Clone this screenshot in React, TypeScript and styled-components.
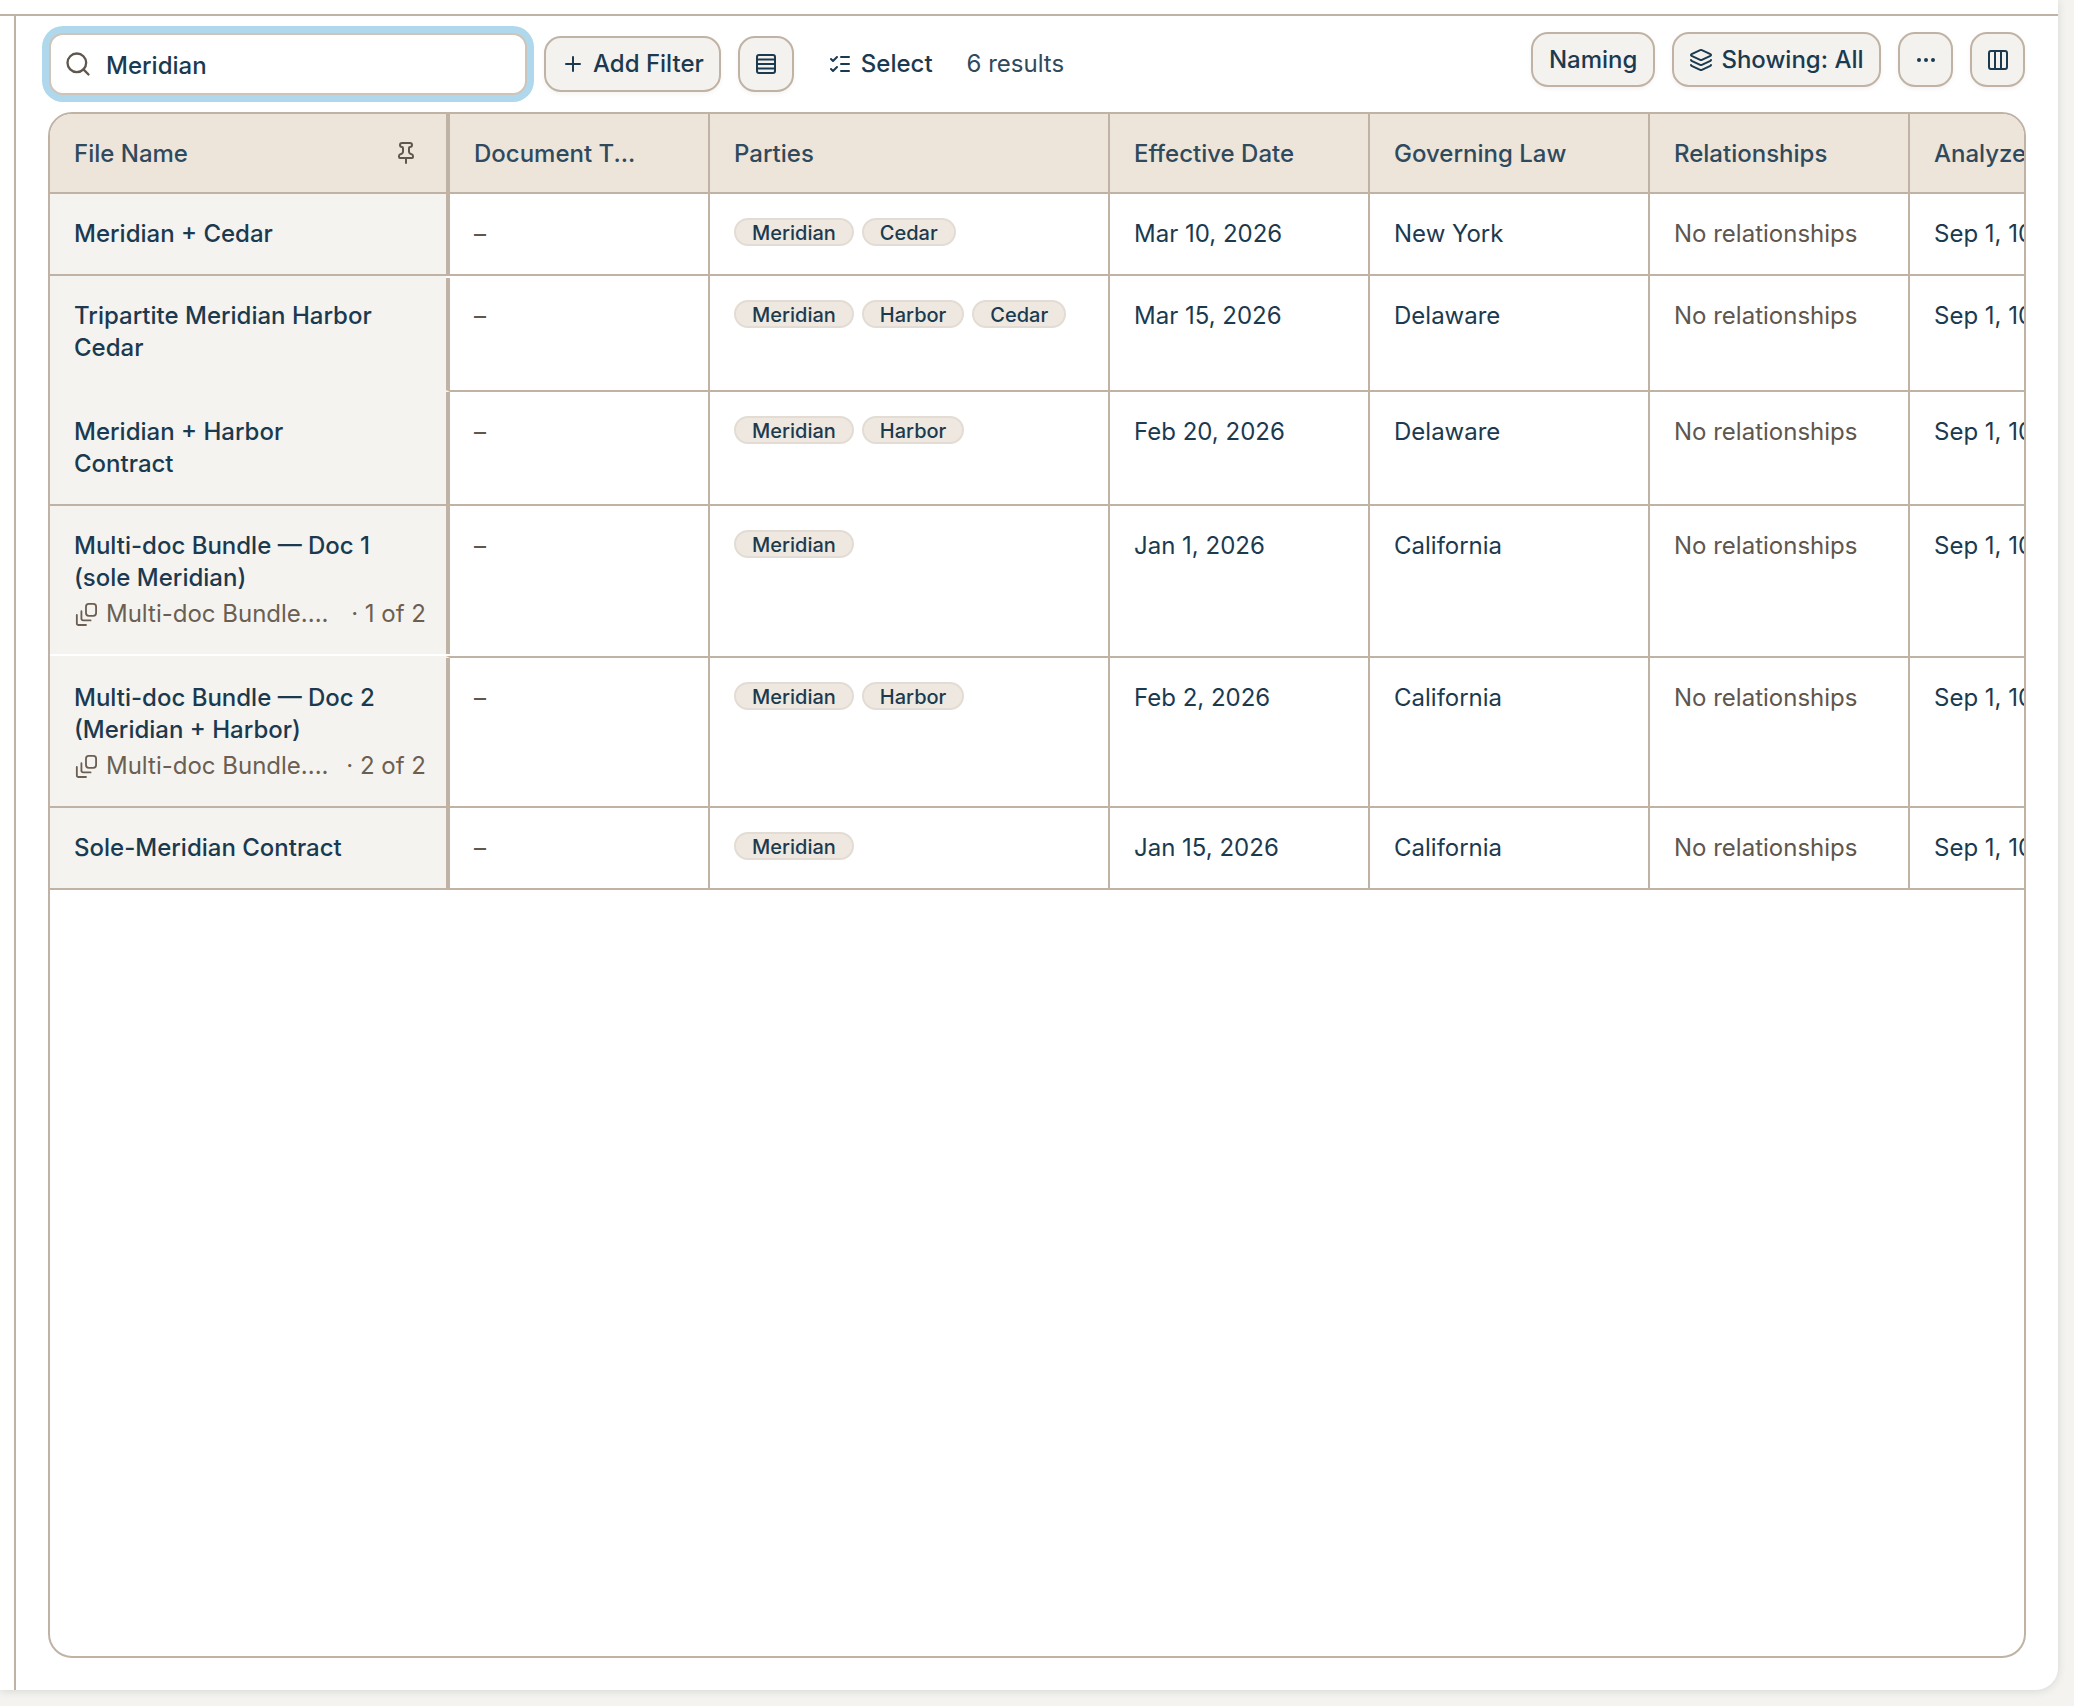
import React from "react";
import styled, { createGlobalStyle } from "styled-components";
import { Search, Plus, Rows4, ListChecks, Layers, Ellipsis, Columns3, Pin } from "lucide-react";

const GlobalStyle = createGlobalStyle`
  html, body { margin: 0; padding: 0; height: 100%; background: #f4f3ef; overflow: hidden; }
  * { box-sizing: border-box; }
  body { font-family: Inter, "Noto Sans", sans-serif; color: #1b3a50; }
`;

const LINE = "#c0b3a5";
const NAVY = "#1b3a50";
const SLATE = "#2f4a5c";
const MUTED = "#5f564c";
const COLS = "400px 260px 400px 260px 280px 260px 260px";

const Panel = styled.div`
  width: 2058px;
  height: 1690px;
  padding-top: 14px;
  background: #fff;
  border-bottom-right-radius: 22px;
  box-shadow: 0 1px 8px rgba(30, 50, 60, 0.14);
  display: flex;
  flex-direction: column;
`;
const TopRule = styled.div`
  height: 2px;
  background: ${LINE};
  flex: none;
`;
const Main = styled.main`
  flex: 1;
  min-height: 0;
  margin-left: 14px;
  border-left: 2px solid ${LINE};
  display: flex;
  flex-direction: column;
`;
const Toolbar = styled.div`
  height: 96px;
  flex: none;
  padding: 16px 33px 0 32px;
  display: flex;
  justify-content: space-between;
  align-items: flex-start;
`;
const LeftGroup = styled.div`
  display: flex;
  align-items: center;
  gap: 17px;
  padding: 1px 0 0 1px;
`;
const RightGroup = styled.div`
  display: flex;
  align-items: center;
  gap: 17px;
`;
const SearchBox = styled.label`
  width: 478px;
  height: 62px;
  display: flex;
  align-items: center;
  gap: 14px;
  padding-left: 13px;
  background: #fff;
  border: 2px solid #cfc4b8;
  border-radius: 14px;
  box-shadow: 0 0 0 7px #b0d8ec;
  color: ${MUTED};
`;
const SearchInput = styled.input`
  flex: 1;
  min-width: 0;
  border: 0;
  outline: 0;
  padding: 4px 0 0;
  background: transparent;
  font: 500 24px/32px Inter, sans-serif;
  color: ${NAVY};
`;
const Button = styled.button`
  height: ${(p) => p.$size ?? 56}px;
  padding: 0 ${(p) => p.$pad ?? 15.5}px;
  display: inline-flex;
  align-items: center;
  justify-content: center;
  gap: 8px;
  background: #f4f2ee;
  border: 2px solid ${LINE};
  border-radius: 17px;
  box-shadow: 0 2px 4px rgba(60, 50, 40, 0.06);
  font: 500 24px/32px Inter, sans-serif;
  color: ${NAVY};
  white-space: nowrap;
`;
const IconButton = styled(Button)`
  width: ${(p) => p.$size ?? 56}px;
  padding: 0;
`;
const GhostButton = styled.button`
  height: 56px;
  padding: 0 17px;
  display: inline-flex;
  align-items: center;
  gap: 9px;
  background: transparent;
  border: 0;
  font: 500 24px/32px Inter, sans-serif;
  color: ${NAVY};
`;
const Results = styled.span`
  font: 400 24px/32px Inter, sans-serif;
  color: ${SLATE};
`;
const Table = styled.div`
  flex: 1;
  min-height: 0;
  margin: 0 32px 32px 32px;
  border: 2px solid ${LINE};
  border-radius: 24px;
  overflow: hidden;
  background: #fff;
`;
const Row = styled.div`
  display: grid;
  grid-template-columns: ${COLS};
  width: max-content;
`;
const HeadCell = styled.div`
  height: 80px;
  padding: 2px ${(p) => (p.$pinned ? 28 : 24)}px 0 24px;
  display: flex;
  align-items: center;
  justify-content: space-between;
  background: #ede4da;
  border-bottom: 2px solid ${LINE};
  border-right: ${(p) => (p.$pinned ? 4 : 2)}px solid ${LINE};
  font: 500 24px/32px Inter, sans-serif;
  color: ${SLATE};
  white-space: nowrap;
  svg { color: ${MUTED}; margin-top: -2px; }
`;
const Cell = styled.div`
  padding: 24px 24px ${(p) => (p.$tall ? 26 : 24)}px;
  border-bottom: 2px solid ${LINE};
  border-right: 2px solid ${LINE};
  font: 400 24px/32px Inter, sans-serif;
  color: ${(p) => (p.$muted ? MUTED : NAVY)};
  white-space: nowrap;
  overflow: hidden;
`;
const FileCell = styled.div`
  position: relative;
  padding: 24px 20px ${(p) => (p.$tall ? 26 : 24)}px 24px;
  background: #f5f3ef;
  border-bottom: 2px solid ${(p) => (p.$rule === "line" ? LINE : "transparent")};
  border-right: 4px solid ${LINE};
  font: 500 24px/32px Inter, sans-serif;
  color: ${NAVY};
  ${(p) =>
    p.$rule === "white"
      ? `&::after { content: ""; position: absolute; left: 0; right: -4px; bottom: 0; height: 2px; background: #fff; }`
      : ""}
  ${(p) =>
    p.$notch
      ? `&::before { content: ""; position: absolute; top: 0; right: -4px; width: 4px; height: 2px; background: #fff; }`
      : ""}
`;
const TitleLine = styled.div`
  white-space: nowrap;
`;
const SubLine = styled.div`
  margin-top: 4px;
  display: flex;
  align-items: center;
  gap: 10px;
  font-weight: 400;
  color: #6b5f53;
  white-space: nowrap;
`;
const SubCount = styled.span`
  margin-left: auto;
`;
const Pills = styled.div`
  display: flex;
  gap: 8px;
`;
const Pill = styled.span`
  height: 28px;
  padding: 2px 16px 0;
  display: inline-flex;
  align-items: center;
  background: #efe8e0;
  border: 2px solid #e3dcd4;
  border-radius: 14px;
  font: 500 20px/24px Inter, sans-serif;
  color: ${NAVY};
`;
const Dash = styled.span`
  color: ${MUTED};
`;
const BundleGlyph = styled.svg`
  flex: none;
  margin-left: 1px;
  margin-right: -1px;
`;

const BundleIcon = () => (
  <BundleGlyph width="22" height="24" viewBox="0 0 24 26" fill="none" stroke="currentColor" strokeWidth="2" strokeLinecap="round" strokeLinejoin="round">
    <rect x="12" y="2" width="11" height="13" rx="3" />
    <path d="M2 14v9a2 2 0 0 0 2 2h8" />
    <path d="M7 10v8a2 2 0 0 0 2 2h8" />
  </BundleGlyph>
);

type Doc = {
  lines: string[];
  parties: string[];
  date: string;
  law: string;
  rule: "line" | "none" | "white";
  tall?: boolean;
  notch?: boolean;
  sub?: string;
};

const docs: Doc[] = [
  { lines: ["Meridian + Cedar"], parties: ["Meridian", "Cedar"], date: "Mar 10, 2026", law: "New York", rule: "line" },
  { lines: ["Tripartite Meridian Harbor", "Cedar"], parties: ["Meridian", "Harbor", "Cedar"], date: "Mar 15, 2026", law: "Delaware", rule: "none", tall: true, notch: true },
  { lines: ["Meridian + Harbor", "Contract"], parties: ["Meridian", "Harbor"], date: "Feb 20, 2026", law: "Delaware", rule: "line" },
  { lines: ["Multi-doc Bundle — Doc 1", "(sole Meridian)"], parties: ["Meridian"], date: "Jan 1, 2026", law: "California", rule: "white", tall: true, sub: "· 1 of 2" },
  { lines: ["Multi-doc Bundle — Doc 2", "(Meridian + Harbor)"], parties: ["Meridian", "Harbor"], date: "Feb 2, 2026", law: "California", rule: "line", sub: "· 2 of 2" },
  { lines: ["Sole-Meridian Contract"], parties: ["Meridian"], date: "Jan 15, 2026", law: "California", rule: "line" },
];

const heads = ["Document T...", "Parties", "Effective Date", "Governing Law", "Relationships", "Analyzed"];

export default function App() {
  return (
    <>
      <GlobalStyle />
      <Panel>
        <TopRule />
        <Main>
          <Toolbar>
            <LeftGroup>
              <SearchBox>
                <Search size={28} strokeWidth={2} />
                <SearchInput value="Meridian" readOnly />
              </SearchBox>
              <Button $pad={15}>
                <Plus size={24} />
                Add Filter
              </Button>
              <IconButton>
                <Rows4 size={24} />
              </IconButton>
              <GhostButton>
                <ListChecks size={24} />
                Select
              </GhostButton>
              <Results>6 results</Results>
            </LeftGroup>
            <RightGroup>
              <Button $size={55}>Naming</Button>
              <Button $size={55}>
                <Layers size={24} />
                Showing: All
              </Button>
              <IconButton $size={55}>
                <Ellipsis size={24} />
              </IconButton>
              <IconButton $size={55}>
                <Columns3 size={24} />
              </IconButton>
            </RightGroup>
          </Toolbar>
          <Table>
            <Row>
              <HeadCell $pinned>
                File Name
                <Pin size={24} strokeWidth={2} />
              </HeadCell>
              {heads.map((h) => (
                <HeadCell key={h}>{h}</HeadCell>
              ))}
            </Row>
            {docs.map((d) => (
              <Row key={d.lines[0]}>
                <FileCell $rule={d.rule} $tall={d.tall} $notch={d.notch}>
                  {d.lines.map((l) => (
                    <TitleLine key={l}>{l}</TitleLine>
                  ))}
                  {d.sub && (
                    <SubLine>
                      <BundleIcon />
                      Multi-doc Bundle....
                      <SubCount>{d.sub}</SubCount>
                    </SubLine>
                  )}
                </FileCell>
                <Cell $tall={d.tall}>
                  <Dash>–</Dash>
                </Cell>
                <Cell $tall={d.tall}>
                  <Pills>
                    {d.parties.map((p) => (
                      <Pill key={p}>{p}</Pill>
                    ))}
                  </Pills>
                </Cell>
                <Cell $tall={d.tall}>{d.date}</Cell>
                <Cell $tall={d.tall}>{d.law}</Cell>
                <Cell $tall={d.tall} $muted>
                  No relationships
                </Cell>
                <Cell $tall={d.tall}>Sep 1, 10:00 AM</Cell>
              </Row>
            ))}
          </Table>
        </Main>
      </Panel>
    </>
  );
}
